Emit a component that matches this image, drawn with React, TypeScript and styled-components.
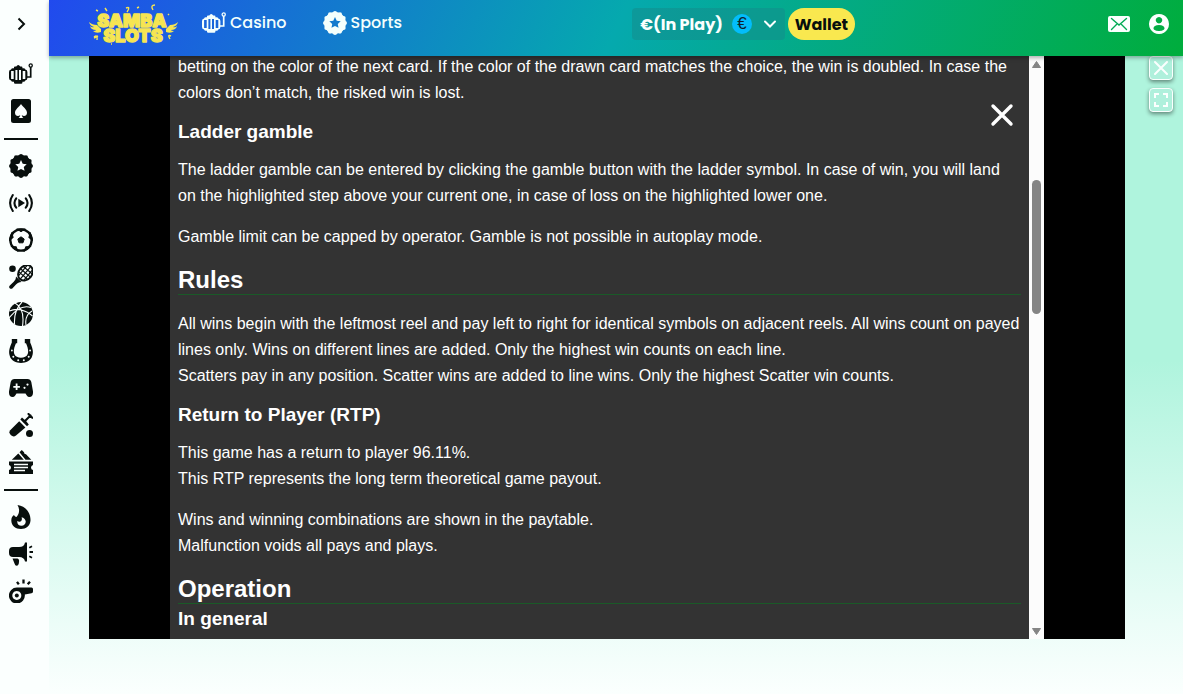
import React from "react";
import styled, { createGlobalStyle } from "styled-components";

const GlobalStyle = createGlobalStyle`
  *, *::before, *::after { box-sizing: border-box; }
  body {
    margin: 0;
    font-family: Poppins, Inter, "Liberation Sans", sans-serif;
    color: #080f0d;
  }
  button { font: inherit; color: inherit; background: none; border: 0; padding: 0; cursor: pointer; }
  a { color: inherit; text-decoration: none; }
  svg { display: block; flex: none; }
`;

const Page = styled.div`
  display: grid;
  grid-template-columns: 49px minmax(0, 1fr);
  min-height: 100vh;
  background: linear-gradient(180deg, #aff4dd 0%, #aff4dd 52%, #ecfdf8 90%, #fbfffe 100%);
`;

const Sidebar = styled.nav`
  background: #fbfffe;
  padding: 0 7px 24px 0;
`;

const SidebarToggle = styled.button`
  display: flex;
  width: 100%;
  height: 56px;
  align-items: center;
  justify-content: center;
  padding-bottom: 8px;
`;

const SideLink = styled.a`
  display: flex;
  justify-content: center;
  padding: 6px 0 7px;
`;

const Divider = styled.hr`
  height: 2px;
  margin: 8px 4px;
  border: 0;
  background: #080f0d;
`;

const Content = styled.div`
  display: flex;
  flex-direction: column;
`;

const Header = styled.header`
  position: sticky;
  top: 0;
  z-index: 2;
  display: grid;
  grid-template-columns: 16fr auto 9fr;
  align-items: center;
  height: 56px;
  background: linear-gradient(115deg, #214aee 0%, #05a9ae 50%, #00ad3c 100%);
  box-shadow: 0 2px 4px rgba(0, 0, 0, 0.3);
`;

const HeaderStart = styled.div`
  display: flex;
  align-items: center;
  padding-left: 40px;
  padding-bottom: 10px;
  height: 56px;
`;

const HeaderNav = styled.nav`
  display: flex;
  gap: 36px;
  margin-left: 24px;
`;

const NavLink = styled.a`
  display: flex;
  align-items: center;
  gap: 4px;
  color: #f4fffc;
  font-size: 16px;
  line-height: 24px;
  font-weight: 500;
`;

const Money = styled.div`
  display: flex;
  gap: 3px;
  padding-bottom: 8px;
`;

const Balance = styled.button`
  display: flex;
  align-items: center;
  height: 32px;
  padding: 0 8px;
  border-radius: 4px;
  background: rgba(20, 140, 140, 0.55);
  color: #fbfffe;
  font-size: 16px;
  font-weight: 700;
`;

const Currency = styled.span`
  display: grid;
  place-items: center;
  width: 20px;
  height: 20px;
  margin: 0 11px 0 9px;
  border-radius: 50%;
  background: #03bdfb;
  color: #10222a;
  font-family: "Liberation Sans", Arial, sans-serif;
  font-size: 17px;
  font-weight: 400;
  line-height: 20px;
`;

const Wallet = styled.button`
  width: 67px;
  height: 32px;
  border-radius: 16px;
  background: #f9e84f;
  font-size: 16px;
  font-weight: 700;
`;

const HeaderEnd = styled.div`
  display: flex;
  justify-content: flex-end;
  padding: 0 4px 8px 0;
`;

const IconButton = styled.button`
  display: grid;
  place-items: center;
  width: 40px;
  height: 40px;
`;

const Main = styled.main`
  display: flex;
  gap: 24px;
  margin-top: -2px;
  padding: 0 10px 55px 40px;
`;

const Stage = styled.section`
  position: relative;
  display: flex;
  flex: 1;
  min-width: 0;
  padding: 0 81px;
  background: #000;
`;

const Help = styled.article`
  flex: 1;
  min-width: 0;
  padding: 0 8px 8px;
  background: #333;
  color: #fff;
  font-family: "Liberation Sans", Arial, sans-serif;
  font-size: 16px;
  line-height: 26px;

  p { margin: 0; }
  p + p { margin-top: 15px; }
  h2 {
    margin: 16px 0;
    border-bottom: 1px solid #1a5a28;
    font-size: 24px;
    line-height: 28px;
  }
  h3 {
    margin: 14px 0 13px;
    font-size: 19px;
    line-height: 24px;
  }
  h2 + h3 { margin: -13px 0 0; }
`;

const ScrollBar = styled.div`
  display: flex;
  flex-direction: column;
  align-items: center;
  width: 15px;
  padding: 7px 0 4px;
  background: #fcfcfc;
`;

const Track = styled.div`
  flex: 1;
  display: grid;
  grid-template-rows: 5fr 6fr 14fr;
  width: 9px;
`;

const Thumb = styled.div`
  grid-row: 2;
  border-radius: 5px;
  background: #858585;
`;

const HelpClose = styled.button`
  position: absolute;
  top: 49px;
  right: 111px;
`;

const StageTools = styled.div`
  display: flex;
  flex-direction: column;
  gap: 8px;
  padding-top: 2px;
`;

const ToolButton = styled.button`
  display: grid;
  place-items: center;
  width: 24px;
  height: 24px;
  border: 1px solid #fbfffe;
  border-radius: 4px;
  background: #aff0dc;
  box-shadow: 0 2px 4px rgba(0, 0, 0, 0.45);
`;

type IconProps = { children: React.ReactNode; size?: number };

const Icon = ({ children, size = 24 }: IconProps) => (
  <svg width={size} height={size} viewBox="0 0 24 24" fill="currentColor" aria-hidden="true">
    {children}
  </svg>
);

const ring = (count: number, radius: number, start = -90) =>
  Array.from({ length: count }, (_, i) => {
    const a = ((start + (i * 360) / count) * Math.PI) / 180;
    return [12 + radius * Math.cos(a), 12 + radius * Math.sin(a)];
  });

const starPath = (outer: number, inner: number) => {
  const o = ring(5, outer);
  const n = ring(5, inner, -54);
  return "M" + o.map((p, i) => `${p.join(" ")}L${n[i].join(" ")}`).join("L") + "Z";
};

const SlotIcon = () => (
  <Icon>
    <path
      fillRule="evenodd"
      d="M5 6.2V5.2Q5 4.5 6 4.5H7.3Q8 3 9.2 3T11.2 4.5H12.5Q13.4 4.5 13.4 5.2V6.2H14.5Q16 6.2 16.3 7.5Q18.4 7.8 18.4 10V16Q18.4 18.3 16.3 18.5Q16 19.8 14.5 19.8H13.4V20.7Q13.4 21.8 12.2 21.8H6.2Q5 21.8 5 20.7V19.8H3.9Q2.4 19.8 2.1 18.5Q0 18.3 0 16V10Q0 7.8 2.1 7.5Q2.4 6.2 3.9 6.2ZM2.1 9V17H4.7V9ZM6.4 8V18H8.4V8ZM10 8V18H12V8ZM13.7 9V17H16.3V9Z"
    />
    <path d="M18 15H21.7V5" fill="none" stroke="currentColor" strokeWidth="1.7" />
    <circle cx="21.7" cy="3.5" r="1.6" fill="none" stroke="currentColor" strokeWidth="1.3" />
  </Icon>
);

const CardIcon = () => (
  <Icon>
    <path
      fillRule="evenodd"
      d="M4.500 0H19.500Q22 0 22 2.500V21.500Q22 24 19.500 24H4.500Q2 24 2 21.500V2.500Q2 0 4.500 0ZM12 5C10.500 8 6 10 6 13.800C6 17 9.500 18 11.200 16C11 17.500 10.500 18.300 9.500 19H14.500C13.500 18.300 13 17.500 12.800 16C14.500 18 18 17 18 13.800C18 10 13.500 8 12 5Z"
    />
  </Icon>
);

const BadgeIcon = () => (
  <Icon>
    {ring(12, 9.9).map(([x, y]) => (
      <circle key={`${x}-${y}`} cx={x} cy={y} r="2.1" />
    ))}
    <path fillRule="evenodd" d={`M12 1A11 11 0 1 1 11.990 1Z${starPath(6, 2.9)}`} />
  </Icon>
);

const LiveIcon = () => (
  <Icon>
    <path d="M9.3 7.700V16.300L16 12Z" />
    <path
      d="M7.200 7.300Q3.700 12 7.200 16.700M3.800 4Q-1.600 12 3.800 20M16.800 7.300Q20.300 12 16.800 16.700M20.200 4Q25.600 12 20.200 20"
      fill="none"
      stroke="currentColor"
      strokeWidth="2.1"
      strokeLinecap="round"
    />
  </Icon>
);

const SoccerIcon = () => (
  <Icon>
    <circle cx="12" cy="12" r="10.7" fill="none" stroke="currentColor" strokeWidth="2.3" />
    {[-90, -18, 54, 126, 198].map((a) => (
      <path key={a} d="M20.3 12L23 7.8V16.2Z" transform={`rotate(${a} 12 12)`} stroke="currentColor" strokeLinejoin="round" />
    ))}
    <path d="M12 8.8L15.2 11.1L14 14.8H10L8.800 11.1Z" stroke="currentColor" strokeLinejoin="round" />
  </Icon>
);

const TennisIcon = () => (
  <Icon>
    <circle cx="3.5" cy="3.8" r="3.3" />
    <g transform="rotate(40 15.5 9)" fill="none" stroke="currentColor">
      <ellipse cx="15.5" cy="7.5" rx="6.7" ry="8.3" strokeWidth="1.9" />
      <path d="M12 1V14M15.5 0V16M19 1V14M9 4H22M9 7.5H22M9 11H22" strokeWidth="1.2" />
    </g>
    <path d="M7 11.5C7 14 6 15.5 4.500 17L0.600 20.700Q-0.300 22 0.700 23.200Q2 24.400 3.300 23.400L7 19.500C8.500 18 10 17 12.500 17Z" />
  </Icon>
);

const BasketballIcon = () => (
  <Icon>
    <circle cx="12" cy="12" r="12" />
    <path
      d="M0.5 9C8 5.5 17 8 23.5 14M6 1C13 5 15 14 13.5 24M13 0C8 5 5 13 5.5 22M0 16C7 7 15 3 22 5.5M23 9C18 12 16 17 17 23"
      fill="none"
      stroke="#fbfffe"
      strokeWidth="1.1"
    />
  </Icon>
);

const HorseshoeIcon = () => (
  <Icon>
    <path d="M2.8 0H8.2V4.3H7C5 9 4.300 12 5.300 15C7 20 17 20 18.700 15C19.700 12 19 9 17 4.300H15.800V0H21.200V3.500C23.700 9 24.700 13 23.200 17C20.700 26.300 3.300 26.300 0.800 17C-0.700 13 0.300 9 2.800 3.500Z" />
    <g fill="#fbfffe">
      <circle cx="2.900" cy="11.5" r="0.900" />
      <circle cx="4.300" cy="17.700" r="1" />
      <circle cx="9.200" cy="21.300" r="1" />
      <circle cx="14.800" cy="21.300" r="1" />
      <circle cx="19.700" cy="17.700" r="1" />
      <circle cx="21.100" cy="11.500" r="0.900" />
    </g>
  </Icon>
);

const GamepadIcon = () => (
  <Icon>
    <path d="M5.500 3H18.500Q21.500 3 22.300 6L24 15.500Q24.300 21 20.500 21Q18.800 21 17.800 19.500L16.500 17.500H7.500L6.200 19.500Q5.200 21 3.500 21Q-0.300 21 0 15.500L1.700 6Q2.500 3 5.500 3Z" />
    <g fill="#fbfffe">
      <path d="M6.700 7.500H8.500V9.900H10.900V11.700H8.500V14.100H6.700V11.700H4.300V9.900H6.700Z" />
      <circle cx="18.500" cy="8.600" r="1.100" />
      <circle cx="15.500" cy="11.800" r="1.100" />
    </g>
  </Icon>
);

const CricketIcon = () => (
  <Icon>
    <path d="M10.200 8.300L16.400 14.500L7 22.500Q4.500 24.500 2 22.300Q-0.700 19.700 1.200 17.300Z" />
    <path d="M11.300 6.500L13 4.500L17 8L19.800 11.500L18 13.300Z" />
    <path d="M15.500 8.500L21.500 2.500M19.500 1L23.300 4.800" stroke="currentColor" strokeWidth="2.1" strokeLinecap="round" />
    <circle cx="20.500" cy="20.400" r="3.500" />
  </Icon>
);

const TicketIcon = () => (
  <Icon>
    <path d="M10.500 2.200L12.800 0L15 2.200Q15 4.300 17 4.200L22.300 9.800H16.500Z" />
    <path d="M9.300 3.500L14.800 9.800H2.800Z" />
    <path d="M0 11.500H24V15Q22 15.500 22 17.500T24 20V24H0V20Q2 19.500 2 17.500T0 15Z" />
    <path d="M5 14.500H19M5 17.500H19M5 20.500H16" fill="none" stroke="#fbfffe" strokeWidth="1.300" />
  </Icon>
);

const FlameIcon = () => (
  <Icon>
    <path
      fillRule="evenodd"
      d="M8.500 0C18 1.500 21.800 9 21.500 15.500C21.300 20.500 17 24 12 24C6.500 24 2.300 20.500 2.300 15.500C2.300 13 3.200 11.300 5 10C5.500 11.200 6.200 11.800 7.500 12C10.500 9 11 4 8.500 0ZM12.600 12.200C13.500 15 12.300 16.300 10.600 16.800C9.800 16.900 9 16.600 8.300 16C8 19 9.800 20.700 12.400 20.700C15.200 20.700 16.900 18.700 16.700 16.300C16.500 14.300 14.800 12.700 12.600 12.200Z"
    />
  </Icon>
);

const MegaphoneIcon = () => (
  <Icon>
    <path d="M4 5H10C13.500 5 15.500 3.500 16 0.500H18V19.500H16C15.500 16.500 13.500 15 10 15H4Q0 15 0 11V9Q0 5 4 5Z" />
    <path d="M3.500 16.500H8.500Q10.500 17 10 20Q9.700 23.800 7.700 23.800Q6 23.800 5.500 21.500Z" />
    <path d="M20.300 5.700L23 4.300M20.500 10H24M20.300 14.300L23 15.700" stroke="currentColor" strokeWidth="1.800" />
  </Icon>
);

const WhistleIcon = () => (
  <Icon>
    <path
      fillRule="evenodd"
      d="M8 8.500H22.500Q24 8.500 24 10V12.500Q24 14 22.500 14.200L15.800 15.500A8 8 0 1 1 8 8.500ZM7.800 11.900A4.500 4.500 0 1 0 7.810 11.900Z"
    />
    <circle cx="7.800" cy="16.400" r="2" />
    <path d="M8 2.800L9.800 5.300M14.500 0.500V4.500M21 2.800L18.700 5.300" stroke="currentColor" strokeWidth="2.300" />
  </Icon>
);

const Logo = () => (
  <svg width="89" height="46" viewBox="0 0 89 46" role="img" aria-label="Samba Slots">
    <g fill="#f6e552" stroke="#f6e552">
      <path
        d="M0 22Q3 25 8 25L12 29V32Q7 34 4 31Q7 31 7 30Q2 30 1 26Q3 28 5 27Q1 26 0 22ZM89 22Q86 25 81 25L77 29V32Q82 34 85 31Q82 31 82 30Q87 30 88 26Q86 28 84 27Q88 26 89 22Z"
        stroke="none"
      />
      <path
        d="M16 8L18 11M7 10L9 11M37 8Q42 6 38 12M48 8L50 7M66 5Q61 5 64 10M5 37Q9 34 8 40M9 36L5 38M82 36Q78 34 81 39M79 14L80 15M22 44L23 44"
        fill="none"
        strokeWidth="1.400"
      />
      <g fontFamily="Inter, sans-serif" fontWeight="900" textAnchor="middle" strokeWidth="1.300" strokeLinejoin="round">
        <text x="43" y="27" fontSize="18">SAMBA</text>
        <text x="44" y="42" fontSize="18">SLOTS</text>
      </g>
    </g>
  </svg>
);

const groups: [string, () => React.ReactElement][][] = [
  [["Casino", SlotIcon], ["Table games", CardIcon]],
  [
    ["Sports", BadgeIcon],
    ["Live", LiveIcon],
    ["Soccer", SoccerIcon],
    ["Tennis", TennisIcon],
    ["Basketball", BasketballIcon],
    ["Horse racing", HorseshoeIcon],
    ["Esports", GamepadIcon],
    ["Cricket", CricketIcon],
    ["My bets", TicketIcon],
  ],
  [["Hot", FlameIcon], ["Promotions", MegaphoneIcon], ["Tips", WhistleIcon]],
];

export default function App() {
  return (
    <Page>
      <GlobalStyle />
      <Sidebar aria-label="Categories">
        <SidebarToggle aria-label="Expand menu">
          <Icon>
            <path d="M9.500 6.500L15 12L9.500 17.500" fill="none" stroke="currentColor" strokeWidth="2" />
          </Icon>
        </SidebarToggle>
        {groups.map((items, i) => (
          <React.Fragment key={i}>
            {i > 0 && <Divider />}
            {items.map(([label, Glyph]) => (
              <SideLink key={label} href="#" aria-label={label}>
                <Glyph />
              </SideLink>
            ))}
          </React.Fragment>
        ))}
      </Sidebar>

      <Content>
        <Header>
          <HeaderStart>
            <a href="#" aria-label="Home">
              <Logo />
            </a>
            <HeaderNav>
              <NavLink href="#"><SlotIcon />Casino</NavLink>
              <NavLink href="#"><BadgeIcon />Sports</NavLink>
            </HeaderNav>
          </HeaderStart>
          <Money>
            <Balance>
              €(In Play)
              <Currency>€</Currency>
              <svg width="14" height="14" viewBox="0 0 14 14" aria-hidden="true">
                <path d="M2 4.500L7 9.500L12 4.500" fill="none" stroke="currentColor" strokeWidth="2" strokeLinecap="round" />
              </svg>
            </Balance>
            <Wallet>Wallet</Wallet>
          </Money>
          <HeaderEnd>
            <IconButton aria-label="Messages">
              <svg width="22" height="16" viewBox="0 0 22 16" aria-hidden="true">
                <rect width="22" height="16" rx="2" fill="#fbfffe" />
                <path d="M3.500 2.500L11 9L18.500 2.500M3.500 13.500L8.500 8.500M18.500 13.500L13.500 8.500" fill="none" stroke="#00aa54" strokeWidth="1.400" strokeLinecap="round" />
              </svg>
            </IconButton>
            <IconButton aria-label="Account">
              <svg width="20" height="20" viewBox="0 0 20 20" fill="#fbfffe" aria-hidden="true">
                <path
                  fillRule="evenodd"
                  d="M10 0A10 10 0 1 1 9.990 0ZM10 3A3.200 3.200 0 1 0 10.010 3ZM10 11C6.500 11 4.500 12.500 4.500 14.200C4.500 16 7.500 17 10 17C12.500 17 15.500 16 15.500 14.200C15.500 12.500 13.500 11 10 11Z"
                />
              </svg>
            </IconButton>
          </HeaderEnd>
        </Header>

        <Main>
          <Stage>
            <Help>
              <p>
                betting on the color of the next card. If the color of the drawn card matches the
                choice, the win is doubled. In case the colors don’t match, the risked win is lost.
              </p>
              <h3>Ladder gamble</h3>
              <p>
                The ladder gamble can be entered by clicking the gamble button with the ladder
                symbol. In case of win, you will land on the highlighted step above your current
                one, in case of loss on the highlighted lower one.
              </p>
              <p>Gamble limit can be capped by operator. Gamble is not possible in autoplay mode.</p>
              <h2>Rules</h2>
              <p>
                All wins begin with the leftmost reel and pay left to right for identical symbols on
                adjacent reels. All wins count on payed lines only. Wins on different lines are
                added. Only the highest win counts on each line.
                <br />
                Scatters pay in any position. Scatter wins are added to line wins. Only the highest
                Scatter win counts.
              </p>
              <h3>Return to Player (RTP)</h3>
              <p>
                This game has a return to player 96.11%.
                <br />
                This RTP represents the long term theoretical game payout.
              </p>
              <p>
                Wins and winning combinations are shown in the paytable.
                <br />
                Malfunction voids all pays and plays.
              </p>
              <h2>Operation</h2>
              <h3>In general</h3>
            </Help>
            <ScrollBar>
              <svg width="9" height="7" viewBox="0 0 9 7" aria-hidden="true">
                <path d="M4.500 0.500L8.500 6.500H0.500Z" fill="#858585" stroke="#858585" strokeLinejoin="round" />
              </svg>
              <Track>
                <Thumb />
              </Track>
              <svg width="9" height="7" viewBox="0 0 9 7" aria-hidden="true">
                <path d="M4.500 6.500L8.500 0.500H0.500Z" fill="#858585" stroke="#858585" strokeLinejoin="round" />
              </svg>
            </ScrollBar>
            <HelpClose aria-label="Close help">
              <svg width="24" height="24" viewBox="0 0 24 24" aria-hidden="true">
                <path d="M3 3L21 21M21 3L3 21" stroke="#fff" strokeWidth="3.400" strokeLinecap="round" />
              </svg>
            </HelpClose>
          </Stage>
          <StageTools>
            <ToolButton aria-label="Close game">
              <svg width="14" height="14" viewBox="0 0 14 14" aria-hidden="true">
                <path d="M1 1L13 13M13 1L1 13" stroke="#fbfffe" strokeWidth="2" strokeLinecap="round" />
              </svg>
            </ToolButton>
            <ToolButton aria-label="Full screen">
              <svg width="14" height="14" viewBox="0 0 14 14" aria-hidden="true">
                <path d="M1 5V1H5M9 1H13V5M13 9V13H9M5 13H1V9" fill="none" stroke="#fbfffe" strokeWidth="2" />
              </svg>
            </ToolButton>
          </StageTools>
        </Main>
      </Content>
    </Page>
  );
}
